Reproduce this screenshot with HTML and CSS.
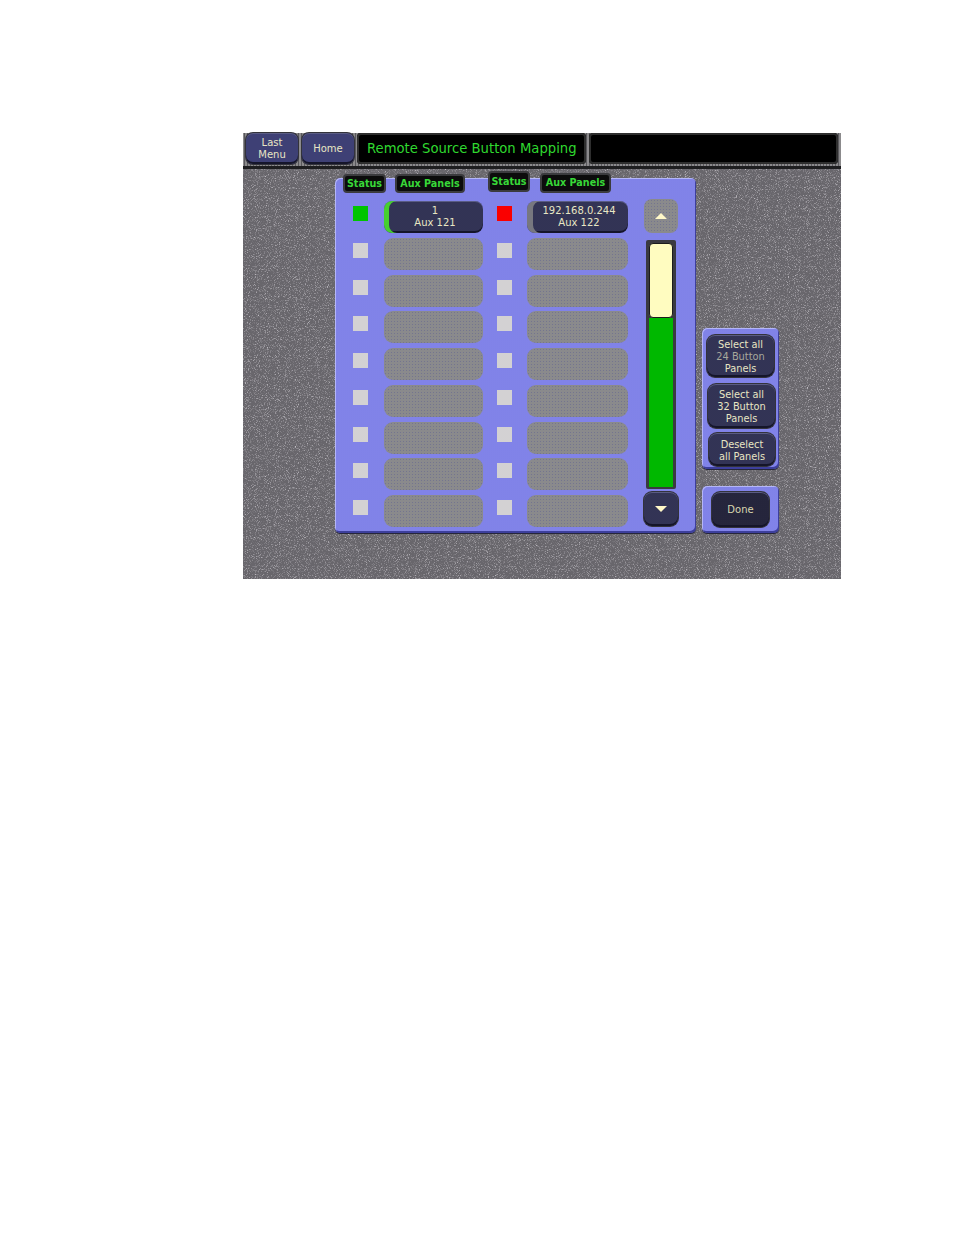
FILE: index.html
```html
<!DOCTYPE html>
<html>
  <head>
    <meta charset="utf-8">
    <meta name="viewport" content="width=device-width">
    <title>Remote Source Button Mapping</title>
    <link rel="stylesheet" href="styles.css">
  </head>
  <body>
    <div class="screen">
      <header class="top-bar">
        <button class="btn nav-btn nav-last">Last<br>Menu</button>
        <button class="btn nav-btn nav-home">Home</button>
        <div class="title-box">Remote Source Button Mapping</div>
        <div class="blank-box"></div>
      </header>
      <main class="content">
        <section class="panel">
          <div class="col-heads">
            <div class="col-head head-status-1">Status</div>
            <div class="col-head head-aux-1">Aux Panels</div>
            <div class="col-head head-status-2">Status</div>
            <div class="col-head head-aux-2">Aux Panels</div>
          </div>
          <div class="panel-body">
            <div class="map-grid">
              <div class="led led-green"></div>
              <button class="btn map-btn tab-green">1<br>Aux 121</button>
              <div class="led led-red"></div>
              <button class="btn map-btn tab-gray">192.168.0.244<br>Aux 122</button>

              <div class="led"></div><div class="map-empty"></div><div class="led"></div><div class="map-empty"></div>
              <div class="led"></div><div class="map-empty"></div><div class="led"></div><div class="map-empty"></div>
              <div class="led"></div><div class="map-empty"></div><div class="led"></div><div class="map-empty"></div>
              <div class="led"></div><div class="map-empty"></div><div class="led"></div><div class="map-empty"></div>
              <div class="led"></div><div class="map-empty"></div><div class="led"></div><div class="map-empty"></div>
              <div class="led"></div><div class="map-empty"></div><div class="led"></div><div class="map-empty"></div>
              <div class="led"></div><div class="map-empty"></div><div class="led"></div><div class="map-empty"></div>
              <div class="led"></div><div class="map-empty"></div><div class="led"></div><div class="map-empty"></div>
            </div>
            <div class="scroll-col">
              <button class="arrow-btn arrow-off" aria-label="Up">
                <svg width="12" height="6" viewBox="0 0 12 6"><path d="M6 0L12 6H0z" fill="#fff8c8"/></svg>
              </button>
              <div class="scroll-track">
                <div class="scroll-thumb"></div>
                <div class="scroll-fill"></div>
              </div>
              <button class="btn arrow-btn" aria-label="Down">
                <svg width="12" height="6" viewBox="0 0 12 6"><path d="M0 0H12L6 6z" fill="#fff8c8"/></svg>
              </button>
            </div>
          </div>
        </section>
        <aside class="side">
          <div class="side-group">
            <button class="btn side-btn side-a">Select all<br><span class="dim">24 Button</span><br>Panels</button>
            <button class="btn side-btn side-b">Select all<br>32 Button<br>Panels</button>
            <button class="btn side-btn side-c">Deselect<br>all Panels</button>
          </div>
          <div class="side-group done-group">
            <button class="btn done-btn">Done</button>
          </div>
        </aside>
      </main>
    </div>
  </body>
</html>
```

FILE: styles.css
```css
* {
  margin: 0;
  padding: 0;
  box-sizing: border-box;
}
body {
  background: white;
  font-family: "DejaVu Sans", Verdana, sans-serif;
  padding: 133px 0 0 243px;
}
button {
  font-family: inherit;
}

/* dither + speckle, the screenshot is a low colour capture */
.screen {
  width: 598px;
  height: 446px;
  background-color: #706e73;
  background-image:
    url("data:image/svg+xml,%3Csvg xmlns='http://www.w3.org/2000/svg' width='300' height='300'%3E%3Cfilter id='n'%3E%3CfeTurbulence type='fractalNoise' baseFrequency='1.1' numOctaves='2' seed='4'/%3E%3CfeColorMatrix values='0 0 0 0 0.6 0 0 0 0 0.58 0 0 0 0 0.62 1.6 1.6 0 0 -1.62'/%3E%3C/filter%3E%3Crect width='300' height='300' filter='url(%23n)'/%3E%3C/svg%3E"),
    radial-gradient(circle, #5f5d62 0 0.6px, transparent 0.8px);
  background-size: 300px 300px, 2px 2px;
}

.top-bar {
  height: 36px;
  display: flex;
  align-items: flex-start;
  padding: 0 3px;
  background-color: #8b8a8c;
  background-image: radial-gradient(circle, #59585c 0 0.6px, transparent 0.8px);
  background-size: 3px 2px;
  border-bottom: 3px solid #1e1e20;
}

.btn {
  border: none;
  background-color: #23243f;
  background-image: radial-gradient(circle, #44466e 0 0.6px, transparent 0.8px);
  background-size: 2px 2px;
  color: #e8e6c4;
  font-size: 10px;
  line-height: 12px;
  text-align: center;
  box-shadow: inset 0 1px 0 #5a5c84, inset 0 -2px 0 #15152a, 0 0 0 1px #33333b;
}

.nav-btn {
  height: 31px;
  padding-top: 1px;
  border-radius: 7px;
  background-color: #2f3060;
  background-image: radial-gradient(circle, #50528c 0 0.6px, transparent 0.8px);
}
.nav-last {
  width: 52px;
}
.nav-home {
  width: 52px;
  margin-left: 4px;
}

.title-box, .blank-box {
  height: 31px;
  background: black;
  border-radius: 4px;
  box-shadow: inset 0 0 0 2px #2e2e2e;
}
.title-box {
  width: 229px;
  margin-left: 3px;
  padding-left: 10px;
  color: #2fd82f;
  font-size: 13.2px;
  line-height: 31px;
  white-space: nowrap;
}
.blank-box {
  flex-grow: 1;
  margin-left: 3px;
}

.content {
  display: flex;
  align-items: flex-start;
  padding: 9px 0 0 92px;
}

.panel {
  width: 361px;
  height: 355px;
  background-color: #8e90f5;
  background-image: radial-gradient(circle, #7274d8 0 0.6px, transparent 0.8px);
  background-size: 2px 2px;
  border-radius: 5px;
  box-shadow: inset 1px 1px 0 #b4b6f8, inset -1px -2px 0 #3d3f9c, 0 1px 0 #26263a;
}

.col-heads {
  display: flex;
  align-items: flex-start;
  height: 22px;
  margin-top: -7px;
}
.col-head {
  height: 19px;
  background: #0c0c0c;
  border: 2px solid #3b3b3e;
  border-radius: 4px;
  color: #38d838;
  font-size: 9.6px;
  font-weight: bold;
  line-height: 15px;
  text-align: center;
  white-space: nowrap;
}
.head-status-1 {
  width: 43px;
  margin: 3px 0 0 8px;
}
.head-aux-1 {
  width: 70px;
  margin: 3px 0 0 9px;
}
.head-status-2 {
  width: 42px;
  height: 21px;
  margin-left: 23px;
  line-height: 17px;
}
.head-aux-2 {
  width: 71px;
  height: 20px;
  margin: 2px 0 0 10px;
  line-height: 16px;
}

.panel-body {
  display: flex;
  align-items: flex-start;
  padding: 0 0 0 18px;
  margin-top: 8px;
}

.map-grid {
  display: grid;
  grid-template-columns: 31px 113px 30px 101px;
  grid-auto-rows: 32px;
  row-gap: 4.75px;
}
.led {
  width: 15px;
  height: 15px;
  margin-top: 5px;
  background-color: #c8c6c8;
  background-image: radial-gradient(circle, #e0dfe0 0 0.6px, transparent 0.8px);
  background-size: 2px 2px;
}
.led-green {
  background: #00c400;
}
.led-red {
  background: #fa0000;
}

.map-btn {
  height: 32px;
  border-radius: 8px;
  padding-left: 3px;
}
.map-grid > :nth-child(4n+2) {
  width: 99px;
}
.tab-green {
  box-shadow: inset 5px 0 0 #46cf2e, inset 0 1px 0 #5a5c84, inset 0 -2px 0 #15152a;
}
.tab-gray {
  box-shadow: inset 6px 0 0 #77777f, inset 0 1px 0 #5a5c84, inset 0 -2px 0 #15152a;
}
.map-empty {
  height: 32px;
  border-radius: 9px;
  background-color: #8a8a8c;
  background-image: radial-gradient(circle, #74758f 0 0.6px, transparent 0.8px);
  background-size: 3px 3px;
}

.scroll-col {
  display: flex;
  flex-direction: column;
  align-items: center;
  width: 34px;
  margin: -2px 0 0 16px;
}
.arrow-btn {
  width: 34px;
  height: 34px;
  border: none;
  border-radius: 8px;
  display: flex;
  align-items: center;
  justify-content: center;
}
.arrow-off {
  background-color: #8a8a8c;
  background-image: radial-gradient(circle, #74758f 0 0.6px, transparent 0.8px);
  background-size: 3px 3px;
}
.scroll-track {
  width: 30px;
  height: 249px;
  margin: 7px 0 3px;
  padding: 3px 3px 2px;
  background: #3a3a40;
  border-radius: 2px;
  display: flex;
  flex-direction: column;
}
.scroll-thumb {
  height: 75px;
  background-color: #fffcc0;
  border: 1px solid #1c1c1c;
  border-radius: 4px;
}
.scroll-fill {
  flex-grow: 1;
  background: #00b800;
}

.side {
  display: flex;
  flex-direction: column;
  width: 77px;
  margin: 150px 0 0 6px;
}
.side-group {
  height: 141px;
  padding: 7px 4px 0 5px;
  background-color: #8e90f5;
  background-image: radial-gradient(circle, #7274d8 0 0.6px, transparent 0.8px);
  background-size: 2px 2px;
  border-radius: 5px;
  box-shadow: inset 1px 1px 0 #b4b6f8, inset -1px -2px 0 #3d3f9c, 0 1px 0 #26263a;
  display: flex;
  flex-direction: column;
  align-items: flex-start;
}
.side-btn {
  padding-top: 2px;
  border-radius: 8px;
  font-size: 9.8px;
}
.side-a {
  width: 67px;
  height: 42px;
}
.side-b {
  width: 67px;
  height: 44px;
  margin: 7px 0 0 1px;
}
.side-c {
  width: 66px;
  height: 33px;
  margin: 5px 0 0 2px;
}
.dim {
  color: #a8a89c;
}
.done-group {
  height: 47px;
  margin-top: 17px;
  padding: 6px 0 0 10px;
}
.done-btn {
  width: 57px;
  height: 35px;
  border-radius: 8px;
  background-color: #1c1c30;
  background-image: radial-gradient(circle, #30304a 0 0.6px, transparent 0.8px);
  color: #d8d6b0;
}
```
